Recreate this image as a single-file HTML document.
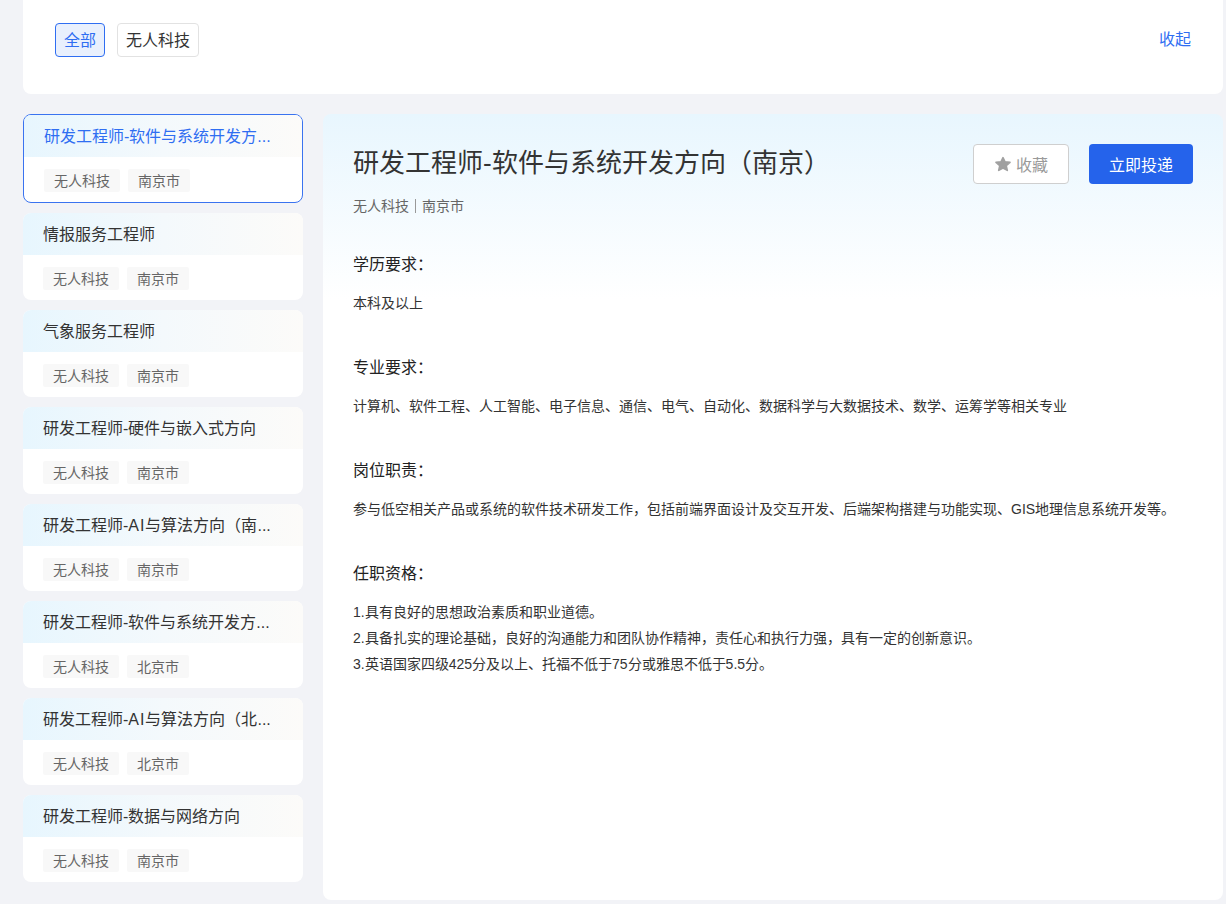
<!DOCTYPE html>
<html lang="zh-CN"><head><meta charset="utf-8">
<style>
*{box-sizing:border-box;margin:0;padding:0}
html,body{width:1226px;height:904px;overflow:hidden}
body{background:#f2f3f7;font-family:"Liberation Sans",sans-serif;color:#333;position:relative}
.top{position:absolute;left:23px;top:-20px;width:1200px;height:114px;background:#fff;border-radius:8px}
.ftag{position:absolute;top:23px;height:34px;border:1px solid #e2e2e2;border-radius:4px;font-size:16px;line-height:32px;padding:1px 8px 0;color:#333;background:#fff}
.ftag.on{border-color:#2f6ef2;background:#e9f0fd;color:#2f6ef2}
.collapse{position:absolute;left:1159px;top:29px;font-size:16px;line-height:22px;color:#2f6ef2}
.card{position:absolute;left:23px;width:280px;height:87px;background:#fff;border-radius:8px;overflow:hidden}
.card .hd{height:42px;background:linear-gradient(90deg,#e7f6fe 0%,#f4f9fc 50%,#fcfbf9 100%);font-size:16px;line-height:42px;padding:1px 0 0 20px;color:#333;white-space:nowrap}
.card .bd{padding:12px 0 0 20px;height:45px}
.card .t{display:inline-block;height:23px;line-height:23px;font-size:14px;color:#666;background:#f8f8f8;padding:1px 10px 0;border-radius:2px;margin-right:8px;vertical-align:top}
.card.sel{border:1px solid #3a73f0;height:89px}
.card.sel .hd{color:#2f6ef2}
.panel{position:absolute;left:323px;top:114px;width:900px;height:786px;border-radius:8px;background:linear-gradient(180deg,#e8f6fe 0px,#fff 185px)}
.title{position:absolute;left:30px;top:34px;font-size:26px;line-height:30px;color:#333;white-space:nowrap}
.sub{position:absolute;left:30px;top:83px;font-size:14px;line-height:18px;color:#666}
.sub .sep{display:inline-block;width:1px;height:14px;background:#999;margin:0 6px;vertical-align:-2px}
.btn1{position:absolute;left:650px;top:30px;width:96px;height:40px;border:1px solid #cfcfcf;border-radius:4px;background:#fff;color:#9a9a9a;font-size:16px;line-height:38px;text-align:center;padding-top:2px}
.btn2{position:absolute;left:766px;top:30px;width:104px;height:40px;border-radius:4px;background:#2563eb;color:#fff;font-size:16px;line-height:40px;text-align:center;padding-top:2px}
.sec{position:absolute;left:30px;width:850px}
.sec h3{font-weight:normal;font-size:16px;line-height:22px;color:#222}
.sec p{font-size:14px;line-height:26px;color:#333}
</style></head><body>
<div class="top"></div>
<div class="ftag on" style="left:55px">全部</div>
<div class="ftag" style="left:117px">无人科技</div>
<div class="collapse">收起</div>

<div class="card sel" style="top:114px"><div class="hd">研发工程师-软件与系统开发方...</div><div class="bd"><span class="t">无人科技</span><span class="t">南京市</span></div></div>
<div class="card" style="top:213px"><div class="hd">情报服务工程师</div><div class="bd"><span class="t">无人科技</span><span class="t">南京市</span></div></div>
<div class="card" style="top:310px"><div class="hd">气象服务工程师</div><div class="bd"><span class="t">无人科技</span><span class="t">南京市</span></div></div>
<div class="card" style="top:407px"><div class="hd">研发工程师-硬件与嵌入式方向</div><div class="bd"><span class="t">无人科技</span><span class="t">南京市</span></div></div>
<div class="card" style="top:504px"><div class="hd">研发工程师-<span style="letter-spacing:1px">AI</span>与算法方向（南...</div><div class="bd"><span class="t">无人科技</span><span class="t">南京市</span></div></div>
<div class="card" style="top:601px"><div class="hd">研发工程师-软件与系统开发方...</div><div class="bd"><span class="t">无人科技</span><span class="t">北京市</span></div></div>
<div class="card" style="top:698px"><div class="hd">研发工程师-<span style="letter-spacing:1px">AI</span>与算法方向（北...</div><div class="bd"><span class="t">无人科技</span><span class="t">北京市</span></div></div>
<div class="card" style="top:795px"><div class="hd">研发工程师-数据与网络方向</div><div class="bd"><span class="t">无人科技</span><span class="t">南京市</span></div></div>

<div class="panel">
  <div class="title">研发工程师-软件与系统开发方向（南京）</div>
  <div class="sub">无人科技<span class="sep"></span>南京市</div>
  <div class="btn1"><svg width="16" height="16" viewBox="0 0 16 16" style="vertical-align:-1px;margin-right:5px"><polygon points="8.00,1.60 10.00,5.85 15.00,6.35 11.23,9.65 12.30,14.40 8.00,12.00 3.70,14.40 4.77,9.65 1.00,6.35 6.00,5.85" fill="#a0a0a0" stroke="#a0a0a0" stroke-width="1.6" stroke-linejoin="round"/></svg>收藏</div>
  <div class="btn2">立即投递</div>
  <div class="sec" style="top:140px"><h3>学历要求：</h3><p style="margin-top:14px">本科及以上</p></div>
  <div class="sec" style="top:243px"><h3>专业要求：</h3><p style="margin-top:14px">计算机、软件工程、人工智能、电子信息、通信、电气、自动化、数据科学与大数据技术、数学、运筹学等相关专业</p></div>
  <div class="sec" style="top:346px"><h3>岗位职责：</h3><p style="margin-top:14px">参与低空相关产品或系统的软件技术研发工作，包括前端界面设计及交互开发、后端架构搭建与功能实现、GIS地理信息系统开发等。</p></div>
  <div class="sec" style="top:449px"><h3>任职资格：</h3><p style="margin-top:14px">1.具有良好的思想政治素质和职业道德。<br>2.具备扎实的理论基础，良好的沟通能力和团队协作精神，责任心和执行力强，具有一定的创新意识。<br>3.英语国家四级425分及以上、托福不低于75分或雅思不低于5.5分。</p></div>
</div>
</body></html>
